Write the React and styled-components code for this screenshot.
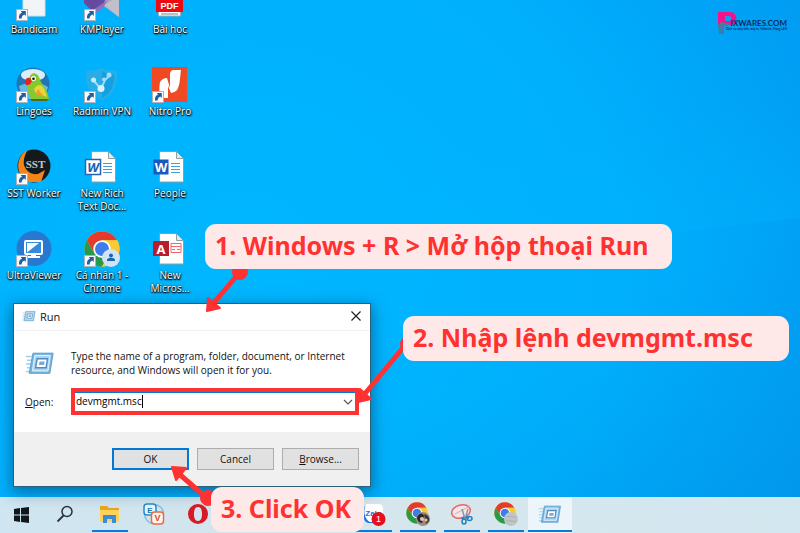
import React, { useState } from 'react';
import styled, { createGlobalStyle } from 'styled-components';

const GlobalStyle = createGlobalStyle`
  * {
    box-sizing: border-box;
  }

  body {
    margin: 0;
    font-family: "Open Sans", "Noto Sans", sans-serif;
    font-size: 10px;
    color: #111;
  }
`;

const Screen = styled.div`
  position: relative;
  display: flex;
  flex-direction: column;
  min-height: 100vh;
  overflow: hidden;
  background:
    linear-gradient(173deg, rgba(0, 184, 255, 0) 30%, rgba(0, 184, 255, 0.25) 50%, rgba(0, 184, 255, 0) 50%),
    linear-gradient(155deg, rgba(0, 130, 210, 0) 65%, rgba(0, 130, 210, 0.25) 100%),
    radial-gradient(ellipse 95% 130% at 30% 50%, #00b7ff 0%, #00b0fd 50%, #009ef4 80%, #0094ee 100%);
`;

const Desktop = styled.main`
  display: flex;
  flex: 1;
  align-items: flex-start;
  justify-content: space-between;
`;

const Shortcuts = styled.div`
  display: grid;
  grid-template-columns: repeat(3, 68px);
  grid-auto-rows: 82px;
  margin-top: -15px;
`;

const Shortcut = styled.a`
  display: flex;
  flex-direction: column;
  align-items: center;
  color: #fff;
  text-decoration: none;
`;

const Label = styled.span`
  margin-top: 2px;
  font-weight: 500;
  line-height: 13px;
  text-align: center;
  white-space: pre;
  text-shadow: 0 1px 1px #000, 1px 1px 2px #000, 0 0 2px rgba(0, 0, 0, 0.7);
`;

const Brand = styled.div`
  display: flex;
  margin: 11px 13px 0 0;
`;

const BrandText = styled.div`
  display: flex;
  flex-direction: column;
  align-items: flex-end;
  margin-left: -12px;
  padding-top: 8px;
  color: #0d2c5c;
`;

const BrandName = styled.span`
  font-family: Lato, sans-serif;
  font-size: 8px;
  font-weight: 700;
  line-height: 8px;
`;

const BrandTagline = styled.span`
  font-family: Lato, sans-serif;
  font-size: 3px;
  font-weight: 700;
  line-height: 4px;
`;

const Dialog = styled.form`
  position: absolute;
  left: 14px;
  bottom: 47px;
  width: 356px;
  background: #fff;
  outline: 1px solid #2a6079;
  box-shadow: 0 4px 14px 2px rgba(0, 40, 80, 0.5);
`;

const TitleBar = styled.header`
  display: flex;
  align-items: center;
  gap: 4px;
  height: 27px;
  padding: 0 8px 2px;
  border-bottom: 1px solid #f1f1f1;
`;

const Title = styled.h1`
  flex: 1;
  margin: 0;
  font-size: 11px;
  font-weight: 400;
`;

const CloseButton = styled.button`
  display: flex;
  padding: 0;
  border: 0;
  background: none;
`;

const Body = styled.div`
  display: grid;
  grid-template-columns: 46px 1fr;
  align-items: center;
  align-content: center;
  row-gap: 10px;
  height: 101px;
  padding: 0 11px;
`;

const Message = styled.p`
  margin: 0;
  line-height: 14px;
`;

const Underlined = styled.span`
  text-decoration: underline;
`;

const Combo = styled.div`
  display: flex;
  align-items: center;
  height: 27px;
  padding: 0 2px 0 1px;
  border: 4px solid #ff3131;
  box-shadow: inset 0 1px #0078d7;
`;

const ComboInput = styled.input`
  field-sizing: content;
  padding: 0;
  border: 0;
  outline: 0;
  background: none;
  font: inherit;
  line-height: 15px;
`;

const Caret = styled.span`
  width: 1px;
  height: 13px;
  margin-right: auto;
  background: #000;
`;

const Footer = styled.footer`
  display: flex;
  justify-content: flex-end;
  gap: 8px;
  padding: 16px 11px;
  background: #f0f0f0;
`;

const Button = styled.button`
  width: 77px;
  height: 22px;
  padding: 0;
  border: ${({ $primary }) => ($primary ? '2px solid #0078d7' : '1px solid #adadad')};
  background: #e1e1e1;
  color: #111;
  font: inherit;
`;

const Taskbar = styled.nav`
  display: flex;
  height: 36px;
  background: linear-gradient(90deg, #cfe5f1, #d6e6ed 50%, #d3e7f0);
`;

const Task = styled.button`
  display: flex;
  flex-direction: column;
  align-items: center;
  justify-content: flex-end;
  width: 44px;
  padding: 0 0 1px;
  border: 0;
  background: ${({ $active }) => ($active ? '#ebf5fa' : 'none')};

  &::after {
    content: '';
    width: ${({ $active }) => ($active ? '44px' : '36px')};
    height: 2px;
    margin-top: 4px;
    background: ${({ $open }) => ($open ? '#0a7ad6' : 'transparent')};
  }
`;

const Arrows = styled.svg`
  position: absolute;
  inset: 0;
  width: 100%;
  height: 100%;
  pointer-events: none;
`;

const Callout = styled.div`
  position: absolute;
  left: ${({ $left }) => $left}px;
  top: ${({ $top }) => $top}px;
  padding: 0 ${({ $end }) => $end}px 2px 10px;
  border-radius: 11px;
  background: #ffe9e8;
  color: #ff3131;
  font-family: "Noto Sans", "Open Sans", sans-serif;
  font-size: 25px;
  font-weight: 700;
  line-height: 43px;
  white-space: nowrap;
`;

const Link = () => (
  <g>
    <rect x="0.5" y="24.5" width="11" height="11" fill="#f7f9fb" stroke="#a9b4bd" />
    <path d="M3 33.5c-.3-3 .6-5 3-5.8L4.800 26h5v5L8.300 29.500C6.500 30.200 5.700 31.500 5.600 33.500z" fill="#235f9e" />
  </g>
);

const Picture = ({ linked, children }) => (
  <svg width="36" height="36" viewBox="0 0 36 36" aria-hidden="true">
    {children}
    {linked && <Link />}
  </svg>
);

const ChromeMark = () => (
  <g>
    <circle cx="18" cy="18" r="17.500" fill="#fbc934" />
    <path d="M2.800 9.300A17.500 17.500 0 0 1 33.200 9.300H18L10.400 22.400z" fill="#e33b2e" />
    <path d="M2.800 9.300A17.500 17.500 0 0 0 18 35.500L25.600 22.400H10.400z" fill="#2a9a48" />
    <path d="M33.200 9.300H18v8.700l7.600 4.400L18 35.500A17.500 17.500 0 0 0 33.200 9.300z" fill="#fbc934" />
    <circle cx="18" cy="18" r="8.700" fill="#fff" />
    <circle cx="18" cy="18" r="7" fill="#3b7ded" />
  </g>
);

const Page = () => (
  <g>
    <path d="M7.500 2.500h17l7 7V33h-24z" fill="#fcfdfd" stroke="#929da3" />
    <path d="M24.500 2.500v7h7z" fill="#e4e9ec" stroke="#929da3" />
  </g>
);

const WordPage = ({ framed }) => (
  <Picture>
    <Page />
    <path d="M19 14.500h9M19 17.500h9M19 20.500h9M19 23.500h9" stroke="#4b9bd8" />
    <rect x="1.500" y="10.500" width="15" height="15" fill={framed ? '#fff' : '#185abd'} stroke="#2a63b0" strokeWidth={framed ? 1.500 : 0} />
    <text x="9" y="22.500" textAnchor="middle" fontSize="13" fontWeight="700" fontStyle={framed ? 'italic' : 'normal'} fill={framed ? '#1c5fb4' : '#fff'}>W</text>
  </Picture>
);

const RunIcon = ({ size }) => (
  <svg width={size} height={size} viewBox="0 0 32 32" aria-hidden="true">
    <path d="M1 9h8M2 13h6M1 17h6M2 21h4M1 25h4" stroke="#a4cfea" strokeWidth="1.500" />
    <path d="M8.500 5.500h21.500l-3.500 21.500H4.500z" fill="#76b5e0" stroke="#5a9bcb" />
    <path d="M10.500 8h16.500l-2.500 16.500H7.800z" fill="#a9d5f1" stroke="#eaf6fd" />
    <path d="M13 11.500h11l-1.500 9.500H11.300z" fill="#fff" stroke="#5389bd" strokeWidth="1.500" />
    <path d="M15.500 14.500h5.500l-.6 3.700h-5.600z" fill="#75abda" />
  </svg>
);

const shortcuts = [
  {
    name: 'Bandicam',
    icon: (
      <Picture linked>
        <path d="M7 0h22v31H7z" fill="#f2f4f5" stroke="#d7dcdf" />
      </Picture>
    ),
  },
  {
    name: 'KMPlayer',
    icon: (
      <Picture linked>
        <path d="M18 0h17v32L18 20z" fill="#aaa8ba" />
        <path d="M35 32L20 20l15-9z" fill="#c1bfca" />
        <path d="M0 8h23c-1 9-5 14-11 17V36H6V24L0 18z" fill="#654aa0" />
        <path d="M9 25l15-10-6 9-8 5z" fill="#8972bf" />
      </Picture>
    ),
  },
  {
    name: 'Bài học',
    icon: (
      <Picture>
        <path d="M6.500 0h22v31h-22z" fill="#fff" stroke="#aaa" />
        <path d="M9 29h17" stroke="#a9a9a9" strokeWidth="1.500" />
        <rect x="4" y="11" width="27" height="16" fill="#ec0b12" />
        <text x="17.500" y="23.500" textAnchor="middle" fontFamily="Liberation Sans, sans-serif" fontSize="9" fontWeight="700" fill="#fff">PDF</text>
      </Picture>
    ),
  },
  {
    name: 'Lingoes',
    icon: (
      <Picture linked>
        <circle cx="17" cy="17" r="16.500" fill="#2374b2" />
        <ellipse cx="17" cy="8" rx="12" ry="6" fill="#d9eefa" />
        <path d="M3 19c7-4 20-5 29 1-2 9-9 13-15 13S4 27 3 19z" fill="#62b9e5" />
        <path d="M13 14c0-10 9-10 11-1 2 5 7 7 9 19l-8 1-9-1c-5-5-5-11-3-18z" fill="#86c82f" />
        <path d="M18 22c5-7 10-5 13 8l-6-2c-3 0-6-2-7-6z" fill="#e6d638" />
        <path d="M22 22l6 8-8-3z" fill="#f29a2d" />
        <path d="M16 13c-3-4-7-2-7 2 0 5 6 4 7-2z" fill="#e52320" />
        <circle cx="17.500" cy="11.500" r="2.500" fill="#fff" />
        <circle cx="17.500" cy="11.700" r="1.300" fill="#111" />
        <path d="M14 32h19l-2 2H16z" fill="#4b6c27" />
      </Picture>
    ),
  },
  {
    name: 'Radmin VPN',
    icon: (
      <Picture linked>
        <path d="M17 1l5 2 11 1c1 15-4 24-15 29C7 29 1 20 2 4l10-1z" fill="#27aee9" />
        <path d="M18 4l4 2 8 1c1 12-3 19-12 24z" fill="#17a0df" />
        <path d="M10 14l7 8 4-9 4-4" fill="none" stroke="#9fdcf8" strokeWidth="2" />
        <circle cx="9.500" cy="13" r="2.500" fill="#c9ecfb" />
        <circle cx="17" cy="21.500" r="3.500" fill="#d9f4ff" />
        <circle cx="25" cy="8" r="2.500" fill="#a3dcf8" />
        <circle cx="20" cy="12.500" r="2" fill="#a3dcf8" />
      </Picture>
    ),
  },
  {
    name: 'Nitro Pro',
    icon: (
      <Picture linked>
        <rect width="35" height="35" fill="#f04a25" />
        <path d="M8 15c1-2 4-4 7-4l3 10V8c0-3 1-5 4-5h7c-1 7-1 14-3 18-1 3-3 4-7 5l-3-7v12H9c-2-5-2-10-1-16z" fill="#fff" />
      </Picture>
    ),
  },
  {
    name: 'SST Worker',
    icon: (
      <Picture linked>
        <circle cx="18" cy="17" r="16.500" fill="#15191d" />
        <path d="M10 2C1 8-1 22 8 30l5 3h12l4-12-7 4c-7 1-12-3-14-9-1-5 1-10 3-14z" fill="#f28519" />
        <text x="19.500" y="18.500" textAnchor="middle" fontFamily="Liberation Serif, serif" fontSize="11" fontWeight="700" fill="#c5c8ca">SST</text>
      </Picture>
    ),
  },
  { name: 'New Rich\nText Doc...', icon: <WordPage framed /> },
  { name: 'People', icon: <WordPage /> },
  {
    name: 'UltraViewer',
    icon: (
      <Picture linked>
        <circle cx="18" cy="17.500" r="17.500" fill="#2878cf" />
        <rect x="9" y="10" width="17" height="13" rx="1" fill="#338be0" stroke="#fff" strokeWidth="2" />
        <path d="M11 21.500V12h12z" fill="#fff" />
        <path d="M15 24h5v1h4v2H11v-2h4z" fill="#fff" />
      </Picture>
    ),
  },
  {
    name: 'Cá nhân 1 -\nChrome',
    icon: (
      <Picture linked>
        <ChromeMark />
        <circle cx="27" cy="27" r="9" fill="#d3e3f4" />
        <circle cx="27" cy="24.500" r="2" fill="#1d66b0" />
        <path d="M23 30v-1c0-3 8-3 8 0v1z" fill="#1d66b0" />
      </Picture>
    ),
  },
  {
    name: 'New\nMicros...',
    icon: (
      <Picture>
        <Page />
        <path d="M19 12.500h10v9h-10zM19 15.500h10M20 18.500h3M25 18.500h3" fill="none" stroke="#ed696b" />
        <rect x="1" y="10" width="16" height="15" fill="#b71c2f" />
        <text x="9" y="22.500" textAnchor="middle" fontSize="13" fontWeight="700" fill="#fff">A</text>
      </Picture>
    ),
  },
];

const TaskIcon = ({ children }) => (
  <svg width="24" height="24" viewBox="0 0 24 24" aria-hidden="true">{children}</svg>
);

const ChromeTask = ({ children }) => (
  <TaskIcon>
    <g transform="scale(0.61)"><ChromeMark /></g>
    {children}
  </TaskIcon>
);

const tasks = [
  {
    name: 'Start',
    icon: (
      <TaskIcon>
        <path d="M4 7l6-1v6.500H4zM11 6l8-1v7.500h-8zM4 13.500h6V20l-6-1zM11 13.500h8V21l-8-1z" fill="#10171d" />
      </TaskIcon>
    ),
  },
  {
    name: 'Search',
    icon: (
      <TaskIcon>
        <circle cx="13" cy="9.500" r="5" fill="none" stroke="#27343d" strokeWidth="1.500" />
        <path d="M9.500 13.500l-6 6" stroke="#27343d" strokeWidth="1.800" />
      </TaskIcon>
    ),
  },
  {
    name: 'File Explorer',
    open: true,
    icon: (
      <TaskIcon>
        <path d="M2 4h7l2 2h10v3H2z" fill="#e9a51d" />
        <path d="M2 8h19v12H2z" fill="#ffd35b" />
        <path d="M5 13h13v8h-4v-4H9v4H5z" fill="#3b8ed6" />
      </TaskIcon>
    ),
  },
  {
    name: 'EVKey',
    icon: (
      <TaskIcon>
        <circle cx="12" cy="12" r="9.500" fill="none" stroke="#88bddf" strokeWidth="1.500" />
        <rect x="2" y="2" width="12" height="11" rx="3" fill="#e7f5fc" stroke="#278cca" strokeWidth="1.500" />
        <text x="8" y="11" textAnchor="middle" fontSize="8" fontWeight="700" fill="#1779bb">E</text>
        <rect x="9.500" y="10" width="12" height="12" rx="3" fill="#fff4ef" stroke="#e96b46" strokeWidth="1.500" />
        <text x="15.500" y="19" textAnchor="middle" fontSize="9" fontWeight="700" fill="#df4824">V</text>
      </TaskIcon>
    ),
  },
  {
    name: 'Opera',
    icon: (
      <TaskIcon>
        <path d="M12 2a10 10 0 1 0 0 20a10 10 0 1 0 0-20zM12 5c3 0 4 3 4 7s-1 7-4 7-4-3-4-7 1-7 4-7z" fill="#d71b26" fillRule="evenodd" />
      </TaskIcon>
    ),
  },
  { name: 'Task view', icon: null },
  { name: 'Notepad', open: true, icon: null },
  { name: 'Settings', open: true, icon: null },
  {
    name: 'Zalo',
    open: true,
    icon: (
      <TaskIcon>
        <rect x="2" y="2" width="19" height="19" rx="5" fill="#1672ef" />
        <path d="M4 2h13a4 4 0 0 1 4 4v10a4 4 0 0 1-4 4H8C2 17 1 8 4 2z" fill="#fff" />
        <text x="11.500" y="14" textAnchor="middle" fontSize="8" fontWeight="700" fill="#1674df">Zalo</text>
        <circle cx="16.500" cy="17" r="7" fill="#e60f1d" />
        <text x="16.500" y="20" textAnchor="middle" fontSize="9" fill="#fff">1</text>
      </TaskIcon>
    ),
  },
  {
    name: 'Chrome',
    open: true,
    icon: (
      <ChromeTask>
        <circle cx="17" cy="17" r="7" fill="#a18c7b" />
        <path d="M11 15c3-5 7-4 7 0l-2 6c-3 0-5-3-5-6z" fill="#28282b" />
        <path d="M18 12c4 1 6 4 5 7l-3 3z" fill="#39383b" />
        <circle cx="16" cy="17" r="2" fill="#e4c7b4" />
        <circle cx="20" cy="18" r="1.500" fill="#e4c7b4" />
      </ChromeTask>
    ),
  },
  {
    name: 'Snipping Tool',
    open: true,
    icon: (
      <TaskIcon>
        <ellipse cx="11" cy="9.500" rx="9.500" ry="6.500" fill="#f5e5e8" stroke="#e6656b" strokeWidth="1.500" transform="rotate(-15 11 9.500)" />
        <path d="M5 12L20 4" stroke="#e9a1a4" />
        <path d="M12 7l3 10M18 7l-3 10" stroke="#839ba9" strokeWidth="1.500" />
        <path d="M14 15l-2 2M16 15l3 1" stroke="#2481c1" strokeWidth="2" />
        <ellipse cx="14" cy="19.500" rx="2" ry="2.500" fill="none" stroke="#2481c1" strokeWidth="1.500" />
        <ellipse cx="19.500" cy="16.500" rx="2.500" ry="2" fill="none" stroke="#2481c1" strokeWidth="1.500" />
      </TaskIcon>
    ),
  },
  {
    name: 'Chrome profile',
    open: true,
    icon: (
      <ChromeTask>
        <circle cx="17" cy="17" r="7" fill="#bfc5c7" />
        <path d="M12 15c4-2 7 1 10 0M12 19c4-1 6 1 10 0" fill="none" stroke="#a9b1b4" />
      </ChromeTask>
    ),
  },
  { name: 'Run', open: true, active: true, icon: <RunIcon size={24} /> },
];

const App = () => {
  const [command, setCommand] = useState('devmgmt.msc');

  return (
    <Screen>
      <GlobalStyle />
      <Desktop>
        <Shortcuts>
          {shortcuts.map(({ name, icon }) => (
            <Shortcut key={name} href="#">
              {icon}
              <Label>{name}</Label>
            </Shortcut>
          ))}
        </Shortcuts>
        <Brand>
          <svg width="20" height="24" viewBox="0 0 20 24" aria-hidden="true">
            <path d="M0 1h12c8 0 9 13 0 13H6v2H0zM7 5v5h4c3 0 3-5 0-5z" fill="#f5128d" fillRule="evenodd" />
            <path d="M0 13l4-2 3 1 6 1-7 3v7H1z" fill="#397da9" />
            <path d="M1 15h5M2 12h4" stroke="#b2508f" />
          </svg>
          <BrandText>
            <BrandName>IXWARES.COM</BrandName>
            <BrandTagline>Dịch vụ máy tính, máy in, Website, Mạng LAN</BrandTagline>
          </BrandText>
        </Brand>
      </Desktop>

      <Taskbar>
        {tasks.map(({ name, icon, open, active }) => (
          <Task key={name} type="button" aria-label={name} $open={open} $active={active}>
            {icon}
          </Task>
        ))}
      </Taskbar>

      <Dialog onSubmit={(event) => event.preventDefault()}>
        <TitleBar>
          <RunIcon size={14} />
          <Title>Run</Title>
          <CloseButton type="button" aria-label="Close">
            <svg width="12" height="12" viewBox="0 0 12 12">
              <path d="M1.500 1.500l9 9M10.500 1.500l-9 9" stroke="#222" strokeWidth="1.200" />
            </svg>
          </CloseButton>
        </TitleBar>
        <Body>
          <RunIcon size={30} />
          <Message>
            Type the name of a program, folder, document, or Internet
            <br />
            resource, and Windows will open it for you.
          </Message>
          <label htmlFor="command">
            <Underlined>O</Underlined>
            pen:
          </label>
          <Combo>
            <ComboInput id="command" value={command} onChange={(event) => setCommand(event.target.value)} />
            <Caret />
            <svg width="10" height="8" viewBox="0 0 10 8" aria-hidden="true">
              <path d="M1 2l4 4 4-4" fill="none" stroke="#555" strokeWidth="1.200" />
            </svg>
          </Combo>
        </Body>
        <Footer>
          <Button type="submit" $primary>OK</Button>
          <Button type="button">Cancel</Button>
          <Button type="button">
            <Underlined>B</Underlined>
            rowse...
          </Button>
        </Footer>
      </Dialog>

      <Arrows aria-hidden="true">
        <g fill="#ff3131" stroke="#ff3131" strokeLinejoin="round">
          <path d="M240 272L212 305M407 343L363 396M208 499L178 473" strokeWidth="5" />
          <path d="M208 298l-1 13 13-3zM360 389l-2 13 13-3zM172 467l14 1-10 12z" strokeWidth="2" />
          <circle cx="240" cy="272" r="7.500" />
          <circle cx="408" cy="344" r="7.500" />
          <circle cx="208" cy="498" r="7.500" />
        </g>
      </Arrows>
      <Callout $left={205} $top={224} $end={24}>1. Windows + R &gt; Mở hộp thoại Run</Callout>
      <Callout $left={403} $top={316} $end={36}>2. Nhập lệnh devmgmt.msc</Callout>
      <Callout $left={211} $top={487} $end={13}>3. Click OK</Callout>
    </Screen>
  );
};

export default App;
